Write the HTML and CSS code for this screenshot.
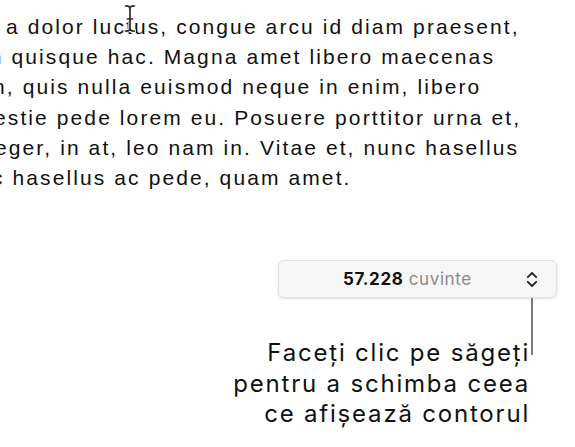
FILE: index.html
```html
<!DOCTYPE html>
<html lang="ro">
<head>
    <meta charset="UTF-8">
    <title>Contor de cuvinte</title>
    <link rel="stylesheet" href="styles.css">
</head>
<body>
    <div class="doc-text">
        <div class="rand r1">a dolor luctus, congue arcu id diam praesent,</div>
        <div class="rand r2">m quisque hac. Magna amet libero maecenas</div>
        <div class="rand r3">n, quis nulla euismod neque in enim, libero</div>
        <div class="rand r4">estie pede lorem eu. Posuere porttitor urna et,</div>
        <div class="rand r5">eger, in at, leo nam in. Vitae et, nunc hasellus</div>
        <div class="rand r6">c hasellus ac pede, quam amet.</div>

        <svg class="cursor-text" width="12" height="29" viewBox="0 0 12 29">
            <path d="M1.5 2 Q6 1.5 6 5 Q6 1.5 10.5 2 M6 5 V24 M1.5 27 Q6 27.5 6 24 Q6 27.5 10.5 27 M3.5 15 H8.5" fill="none" stroke="#fff" stroke-width="3.4" stroke-linecap="round"/>
            <path d="M1.5 2 Q6 1.5 6 5 Q6 1.5 10.5 2 M6 5 V24 M1.5 27 Q6 27.5 6 24 Q6 27.5 10.5 27 M3.5 15 H8.5" fill="none" stroke="#2b2b2b" stroke-width="1.7" stroke-linecap="round"/>
        </svg>
    </div>

    <div class="bara-contor">
        <button class="contor" type="button">
            <span class="numar"><b>57.228</b> cuvinte</span>
            <svg class="sageti" width="12" height="17" viewBox="0 0 12 17">
                <path d="M1.8 6.2 L6 2 L10.2 6.2 M1.8 10.8 L6 15 L10.2 10.8" fill="none" stroke="#222" stroke-width="1.8" stroke-linecap="round" stroke-linejoin="round"/>
            </svg>
        </button>
    </div>

    <div class="explicatie">
        <p class="nota">Faceți clic pe săgeți<br>pentru a schimba ceea<br>ce afișează contorul</p>
        <div class="linie"></div>
    </div>
</body>
</html>
```

FILE: styles.css
```css
body {
    margin: 0;
    padding: 0;
    width: 575px;
    height: 447px;
    overflow: hidden;
    background-color: #fff;
}

.doc-text {
    position: relative;
    padding-top: 12px;
    font-family: "Liberation Sans", Arial, sans-serif;
    font-size: 21px;
    letter-spacing: 2.1px;
    line-height: 30.2px;
    color: #111;
    white-space: nowrap;
    overflow: hidden;
}

.rand {
    height: 30.2px;
}

/* fiecare rand e taiat diferit la stanga */
.r1 { margin-left: 6px; }
.r2 { margin-left: -16px; }
.r3 { margin-left: -7px; }
.r4 { margin-left: -6px; }
.r5 { margin-left: -5px; }
.r6 { margin-left: -8px; }

.cursor-text {
    position: absolute;
    left: 124px;
    top: 4px;
}

.bara-contor {
    display: flex;
    justify-content: flex-end;
    padding-top: 67px;
    padding-right: 18px;
}

.contor {
    width: 279px;
    height: 38px;
    display: flex;
    align-items: center;
    justify-content: space-between;
    padding: 0 18px 0 64px;
    background-color: #f7f7f7;
    border: 1px solid #e2e2e2;
    border-radius: 6px;
    box-shadow: 0 1px 3px rgba(0, 0, 0, 0.12);
    font-family: Inter, "Noto Sans", sans-serif;
    font-size: 17px;
    letter-spacing: 0.6px;
    color: #8a8a8a;
}

.contor b {
    color: #111;
    font-weight: 700;
}

.explicatie {
    display: flex;
    justify-content: flex-end;
    align-items: flex-start;
    padding-right: 42px;
}

.nota {
    margin: 40px 1px 0 0;
    font-family: Inter, "Noto Sans", sans-serif;
    font-size: 24px;
    letter-spacing: 1.8px;
    line-height: 30.5px;
    color: #111;
    text-align: right;
}

.linie {
    width: 2px;
    height: 57px;
    background-color: #7a7a7a;
}
```
